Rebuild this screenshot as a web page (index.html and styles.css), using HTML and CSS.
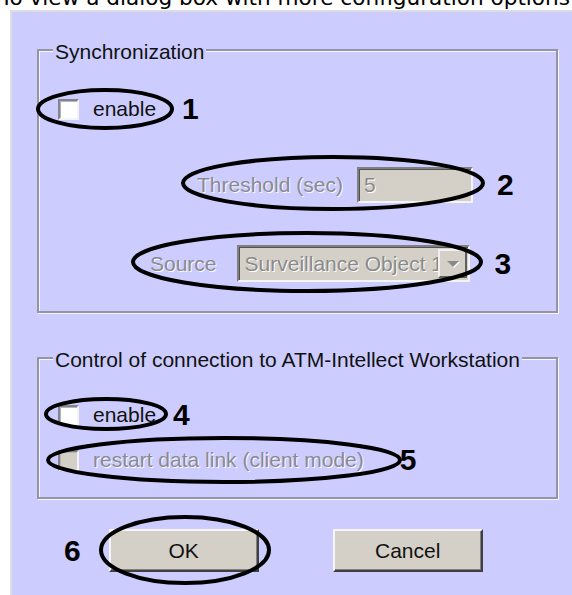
FILE: index.html
```html
<!DOCTYPE html>
<html>
<head>
<meta charset="utf-8">
<title>Synchronization settings</title>
<link rel="stylesheet" href="styles.css">
</head>
<body>
<p class="cap">To view a dialog box with more configuration options</p>
<div class="dlg">
  <div class="grp g1">
    <b class="ttl">Synchronization</b>
    <div class="row r1">
      <i class="chk"></i>
      <span class="lbl">enable</span>
      <em class="num n1">1</em>
    </div>
    <div class="row r2">
      <span class="lbl off">Threshold (sec)</span>
      <span class="fld">5</span>
      <em class="num n2">2</em>
    </div>
    <div class="row r3">
      <span class="lbl off">Source</span>
      <span class="fld sel"><span class="val">Surveillance Object 1</span><i class="drop"></i></span>
      <em class="num n3">3</em>
    </div>
  </div>
  <div class="grp g2">
    <b class="ttl">Control of connection to ATM-Intellect Workstation</b>
    <div class="row r4">
      <i class="chk"></i>
      <span class="lbl">enable</span>
      <em class="num n4">4</em>
    </div>
    <div class="row r5">
      <i class="chk dis"></i>
      <span class="lbl off">restart data link (client mode)</span>
      <em class="num n5">5</em>
    </div>
  </div>
  <div class="btns">
    <em class="num n6">6</em>
    <span class="btn ok">OK</span>
    <span class="btn cancel">Cancel</span>
  </div>
</div>
<!-- hand drawn marks over the dialog -->
<svg class="marks" width="572" height="595" viewBox="0 0 572 595">
  <g fill="none" stroke="#000" stroke-width="4">
    <ellipse cx="105" cy="109" rx="67" ry="19"/>
    <ellipse cx="333" cy="183" rx="150" ry="26"/>
    <ellipse cx="307" cy="262" rx="174" ry="29"/>
    <ellipse cx="106" cy="414" rx="60" ry="15"/>
    <ellipse cx="224" cy="460" rx="176" ry="22"/>
    <ellipse cx="185" cy="550" rx="84" ry="33"/>
  </g>
</svg>
</body>
</html>
```

FILE: styles.css
```css
html,body{margin:0;background:#fff}
body{display:flow-root;width:572px;height:595px;overflow:hidden;position:relative;font-family:"Liberation Sans",Arial,sans-serif;font-size:21px;color:#111}
.cap{margin:-13px 0 0;height:23px;font:21.6px/1 "DejaVu Sans",Verdana,sans-serif;white-space:nowrap;color:#000}
.dlg{box-sizing:border-box;margin-left:10px;height:585px;background:#ccccff;border-left:2px solid #dcdce4;border-top:2px solid #dcdce4;padding:37px 0 0 25px}

/* group boxes */
.grp{box-sizing:border-box;width:521px;border:2px solid #9494a8;box-shadow:inset 1px 1px 0 #f6f6ff,1px 1px 0 #f6f6ff}
.g1{padding-bottom:29px}
.g2{margin-top:44px;padding-bottom:23px}
.ttl{display:block;width:fit-content;margin:-11px 0 0 14px;padding:0 2px;background:#ccccff;font-weight:normal;line-height:24px;color:#111}

.row{display:flex;align-items:center;height:28px}
.r1{margin-top:31px;padding-left:19px}
.r2{margin-top:44px;padding-left:158px;height:36px}
.r3{margin-top:42px;padding-left:111px;height:37px}
.r4{margin-top:29px;padding-left:19px}
.r5{margin-top:17px;padding-left:19px}

.lbl{white-space:nowrap;line-height:24px}
.chk + .lbl{margin-left:14px}
.off{color:#8a8a92;text-shadow:1px 1px 0 #fafaff}

.chk{box-sizing:border-box;width:21px;height:21px;background:#fff;border:2px solid;border-color:#84848c #f4f4f4 #f4f4f4 #84848c;box-shadow:inset 1px 1px 0 #b4b4b8}
.chk.dis{background:#d4d0c8}

.fld{box-sizing:border-box;display:flex;align-items:center;width:116px;height:36px;margin-left:14px;padding-left:5px;background:#d4d0c8;border:2px solid;border-color:#808080 #f4f4f4 #f4f4f4 #808080;box-shadow:inset 1px 1px 0 #505050;color:#8a8a8a;text-shadow:1px 1px 0 #fff}
.sel{width:233px;height:37px;margin-left:20px;padding:0 0 0 6px}
.val{flex:1;overflow:hidden;white-space:nowrap}
.drop{position:relative;box-sizing:border-box;width:29px;height:29px;margin-right:1px;background:#d4d0c8;border:2px solid;border-color:#f0f0f0 #606060 #606060 #f0f0f0}
.drop:after{content:'';position:absolute;left:7px;top:10px;border:6px solid transparent;border-top:6px solid #8a8a8a;border-bottom:0;filter:drop-shadow(1px 1px 0 #fff)}

/* annotation numbers */
.num{font:bold 30px/28px "Liberation Sans",Arial,sans-serif;color:#000}
.n1{margin-left:26px}
.n2{margin-left:24px}
.n3{margin-left:25px}
.n4{margin-left:17px}
.n5{margin-left:36px}

.btns{display:flex;align-items:center;margin-top:30px;height:43px}
.n6{margin-left:27px}
.btn{box-sizing:border-box;display:flex;align-items:center;justify-content:center;width:150px;height:43px;background:#d4d0c8;border:2px solid;border-color:#f6f6f6 #404040 #404040 #f6f6f6;box-shadow:inset -1px -1px 0 #808080;color:#111}
.ok{margin-left:28px}
.cancel{margin-left:74px}

.marks{position:absolute;left:0;top:0;pointer-events:none}
```
